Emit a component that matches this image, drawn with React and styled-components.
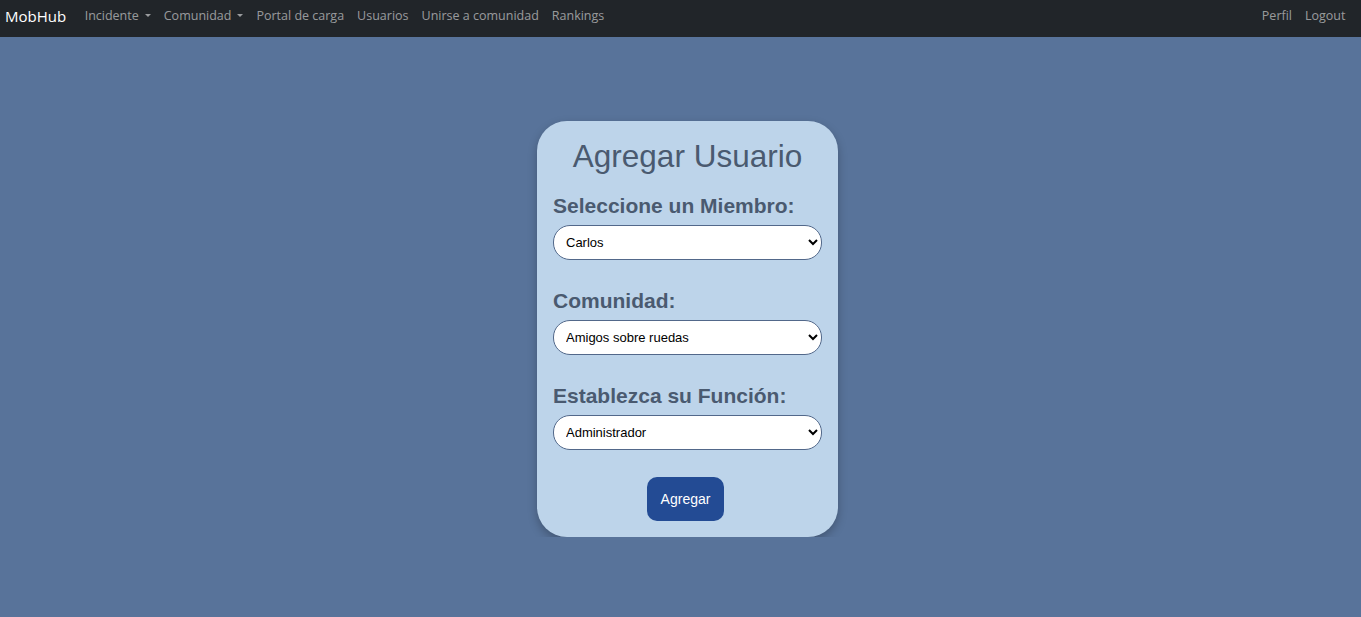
import React, { useState } from "react"
import styled, { createGlobalStyle } from "styled-components"

const GlobalStyle = createGlobalStyle`
  * { box-sizing: border-box; }
  body {
    margin: 0;
    background-color: #58739a;
    font-family: "Liberation Sans", Arial, sans-serif;
  }
`

const navLinks = [
  { label: "Incidente", dropdown: true },
  { label: "Comunidad", dropdown: true },
  { label: "Portal de carga" },
  { label: "Usuarios" },
  { label: "Unirse a comunidad" },
  { label: "Rankings" },
]

const fields = [
  { id: "miembro", label: "Seleccione un Miembro:", options: ["Carlos", "Lucía", "Martín"] },
  { id: "comunidad", label: "Comunidad:", options: ["Amigos sobre ruedas", "Vecinos unidos"] },
  { id: "funcion", label: "Establezca su Función:", options: ["Administrador", "Miembro"] },
]

export default function App() {
  const [values, setValues] = useState({
    miembro: "Carlos",
    comunidad: "Amigos sobre ruedas",
    funcion: "Administrador",
  })

  const handleChange = (id) => (e) => {
    setValues({ ...values, [id]: e.target.value })
  }

  return (
    <>
      <GlobalStyle />
      <Navbar>
        <NavLeft>
          <Brand href="#">MobHub</Brand>
          {navLinks.map((link) => (
            <NavLink key={link.label} href="#">
              {link.label}
              {link.dropdown && <Caret />}
            </NavLink>
          ))}
        </NavLeft>
        <NavRight>
          <NavLink href="#">Perfil</NavLink>
          <NavLink href="#">Logout</NavLink>
        </NavRight>
      </Navbar>

      <Main>
        <Card onSubmit={(e) => e.preventDefault()}>
          <Title>Agregar Usuario</Title>
          {fields.map((field) => (
            <Field key={field.id}>
              <Label htmlFor={field.id}>{field.label}</Label>
              <Select id={field.id} value={values[field.id]} onChange={handleChange(field.id)}>
                {field.options.map((opt) => (
                  <option key={opt}>{opt}</option>
                ))}
              </Select>
            </Field>
          ))}
          <SubmitButton type="submit">Agregar</SubmitButton>
        </Card>
      </Main>
    </>
  )
}

const Navbar = styled.nav`
  display: flex;
  align-items: center;
  justify-content: space-between;
  height: 37px;
  padding: 0 9px 6px 5px;
  background-color: #212529;
  font-family: "Open Sans", "Noto Sans", sans-serif;
`

const NavLeft = styled.div`
  display: flex;
  align-items: center;
`

const NavRight = styled.div`
  display: flex;
  align-items: center;
`

const Brand = styled.a`
  color: #fff;
  font-size: 15px;
  text-decoration: none;
  margin-right: 12px;
`

const NavLink = styled.a`
  display: flex;
  align-items: center;
  padding: 0 6.5px;
  color: rgba(255, 255, 255, 0.55);
  font-size: 12.5px;
  text-decoration: none;

  &:first-of-type {
    margin-left: -2px;
  }
`

const Caret = styled.span`
  margin-left: 6px;
  width: 0;
  height: 0;
  border-left: 3px solid transparent;
  border-right: 3px solid transparent;
  border-top: 3px solid currentColor;
`

const Main = styled.main`
  display: flex;
  justify-content: center;
  padding: 84px 0 0 14px;
`

const Card = styled.form`
  display: flex;
  flex-direction: column;
  align-items: center;
  width: 301px;
  padding: 17px 16px 16px;
  background-color: #bdd4ea;
  border-radius: 30px;
  box-shadow: 0 4px 10px rgba(0, 0, 0, 0.25);
`

const Title = styled.h1`
  margin: 0 0 18px;
  font-size: 31.5px;
  line-height: 37px;
  font-weight: 400;
  color: #4a5a70;
`

const Field = styled.div`
  display: flex;
  flex-direction: column;
  width: 100%;
  margin-bottom: 28px;
`

const Label = styled.label`
  font-size: 21px;
  line-height: 26px;
  font-weight: 700;
  color: #4a5a70;
  margin-bottom: 6px;
`

const Select = styled.select`
  width: 100%;
  height: 35px;
  padding: 0 8px;
  border: 1px solid #52688a;
  border-radius: 17px;
  background-color: #fff;
  color: #000;
  font-family: "Liberation Sans", Arial, sans-serif;
  font-size: 13px;
`

const SubmitButton = styled.button`
  width: 77px;
  height: 44px;
  margin: -1px 4px 0 0;
  border: none;
  border-radius: 10px;
  background-color: #234b94;
  color: #fff;
  font-family: "Liberation Sans", Arial, sans-serif;
  font-size: 14px;
  cursor: pointer;
`
